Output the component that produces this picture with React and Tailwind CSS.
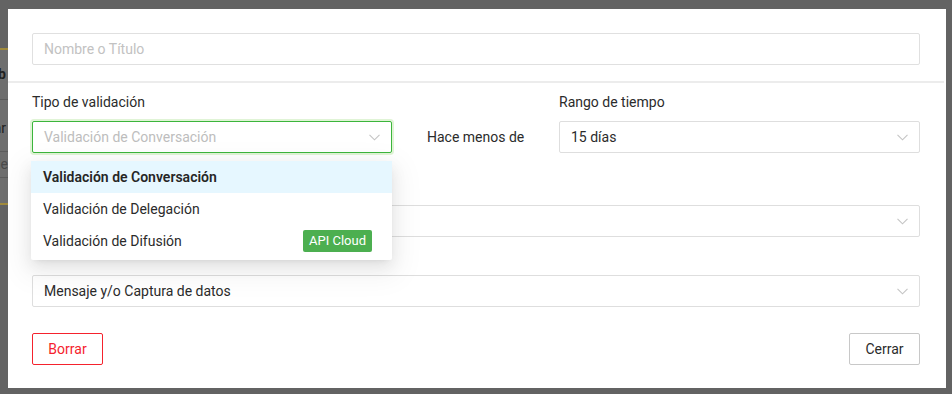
import { useState } from 'react'

function Chevron() {
  return (
    <svg width="11" height="7" viewBox="0 0 11 7" fill="none" className="shrink-0">
      <path d="M0.5 0.8l5 5 5-5" stroke="#c4c4c4" strokeWidth="1.1" />
    </svg>
  )
}

function SelectBox({ value, placeholder, focused }) {
  return (
    <div
      className={
        'h-[32px] flex items-center justify-between pl-[11px] pr-[11px] rounded-[2px] bg-white border ' +
        (focused ? 'border-[#3cb53c] shadow-[0_0_0_2px_rgba(82,196,26,0.18)]' : 'border-[#dedede]')
      }
    >
      <span className={value ? 'text-[#2b2b2b]' : 'text-[#bdbdbd]'}>{value || placeholder}</span>
      <Chevron />
    </div>
  )
}

const options = [
  { label: 'Validación de Conversación', active: true },
  { label: 'Validación de Delegación' },
  { label: 'Validación de Difusión', badge: 'API Cloud' },
]

export default function App() {
  const [title] = useState('')

  return (
    <div className="relative w-[952px] h-[394px] overflow-hidden bg-[#636363] font-['Roboto',sans-serif] text-[14px]">
      {/* page behind the overlay */}
      <div className="absolute left-[-60px] top-[48px] w-[68px] h-[157px] bg-[#6e6e6e] border-y-2 border-[#a08a3c] text-[#1f1f1f]">
        <div className="h-[50px] border-b border-[#5c5c5c] flex items-center justify-end pr-[2px] font-bold">ib</div>
        <div className="h-[52px] border-b border-[#5c5c5c] flex items-end justify-end pb-[12px] pr-[2px]">ar</div>
        <div className="h-[26px] border-b border-[#5c5c5c] flex items-center justify-end text-[#4a4a4a]">ale</div>
      </div>

      {/* modal */}
      <div className="relative ml-[8px] mt-[9px] w-[938px] h-[379px] bg-white pt-[24px]">
        <div className="pl-[24px] pr-[26px]">
          <div className="h-[32px] flex items-center px-[11px] border border-[#e0e0e0] rounded-[2px] text-[#c2c2c2]">
            {title || 'Nombre o Título'}
          </div>
        </div>

        <div className="mt-[16px] h-[2px] bg-[#ececec] mr-[2px]" />

        <div className="pl-[24px] pr-[26px]">
          {/* labels row */}
          <div className="flex mt-[8px] h-[22px] leading-[22px] text-[#2b2b2b]">
            <div className="w-[527px]">Tipo de validación</div>
            <div>Rango de tiempo</div>
          </div>

          {/* selects row */}
          <div className="flex items-center mt-[8px]">
            <div className="relative w-[360px] shrink-0">
              <SelectBox placeholder="Validación de Conversación" focused />
              <div className="absolute z-10 left-[-1px] top-[40px] w-[361px] bg-white rounded-[2px] pb-[3px] shadow-[0_3px_6px_-4px_rgba(0,0,0,0.12),0_6px_16px_0_rgba(0,0,0,0.08),0_9px_28px_8px_rgba(0,0,0,0.05)]">
                {options.map((o) => (
                  <div
                    key={o.label}
                    className={
                      'h-[32px] flex items-center justify-between pl-[12px] pr-[20px] ' +
                      (o.active ? 'bg-[#e6f7ff] font-semibold text-[#262626]' : 'text-[#2b2b2b]')
                    }
                  >
                    <span>{o.label}</span>
                    {o.badge && (
                      <span className="h-[22px] leading-[22px] px-[6px] rounded-[2px] bg-[#4caf50] text-white text-[13px]">
                        {o.badge}
                      </span>
                    )}
                  </div>
                ))}
              </div>
            </div>
            <div className="w-[167px] shrink-0 pl-[35px] text-[#2b2b2b]">Hace menos de</div>
            <div className="flex-1">
              <SelectBox value="15 días" />
            </div>
          </div>

          {/* group hidden behind the open dropdown */}
          <div className="mt-[52px]">
            <SelectBox value="" placeholder="" />
          </div>

          <div className="mt-[38px]">
            <SelectBox value="Mensaje y/o Captura de datos" />
          </div>

          <div className="flex justify-between mt-[26px]">
            <button className="h-[32px] w-[71px] rounded-[2px] border border-[#f5222d] text-[#f5222d] bg-white">
              Borrar
            </button>
            <button className="h-[32px] w-[71px] rounded-[2px] border border-[#c8c8c8] text-[#2b2b2b] bg-white">
              Cerrar
            </button>
          </div>
        </div>
      </div>
    </div>
  )
}
